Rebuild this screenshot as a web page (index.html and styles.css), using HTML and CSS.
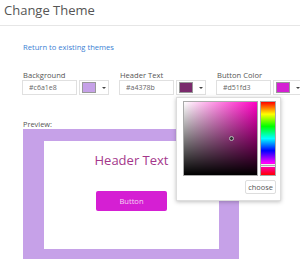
FILE: index.html
```html
<!DOCTYPE html>
<html lang="en">
<head>
  <meta charset="UTF-8">
  <title>Change Theme</title>
  <link rel="stylesheet" href="styles.css">
</head>
<body>
  <div class="header">
    <h1>Change Theme</h1>
  </div>

  <div class="content">
    <a class="back-link" href="#">Return to existing themes</a>

    <div class="fields">
      <div class="field">
        <label for="bg">Background</label>
        <div class="field-row">
          <input id="bg" type="text" value="#c6a1e8">
          <div class="swatch-btn">
            <span class="swatch swatch-bg"></span>
            <span class="caret"></span>
          </div>
        </div>
      </div>

      <div class="field">
        <label for="hdr">Header Text</label>
        <div class="field-row">
          <input id="hdr" type="text" value="#a4378b">
          <div class="swatch-btn">
            <span class="swatch swatch-hdr"></span>
            <span class="caret"></span>
            <div class="picker">
              <div class="picker-main">
                <div class="sv-box">
                  <span class="sv-cursor"></span>
                </div>
                <div class="hue-bar">
                  <span class="hue-marker"></span>
                </div>
              </div>
              <div class="picker-foot">
                <button class="choose-btn">choose</button>
              </div>
            </div>
          </div>
        </div>
      </div>

      <div class="field">
        <label for="btn">Button Color</label>
        <div class="field-row">
          <input id="btn" type="text" value="#d51fd3">
          <div class="swatch-btn">
            <span class="swatch swatch-btn-color"></span>
            <span class="caret"></span>
          </div>
        </div>
      </div>
    </div>

    <div class="preview-label">Preview:</div>
    <div class="preview">
      <div class="preview-inner">
        <div class="preview-title">Header Text</div>
        <div class="preview-button">Button</div>
      </div>
    </div>
  </div>
</body>
</html>
```

FILE: styles.css
```css
body {
  margin: 0;
  font-family: "Open Sans", "DejaVu Sans", sans-serif;
  background: #fff;
  color: #555;
  overflow: hidden;
}
.header {
  padding: 1px 0 6px 4px;
  border-bottom: 1px solid #e6e6e6;
}
h1 {
  margin: 0;
  font-size: 13px;
  line-height: 18px;
  font-weight: normal;
  color: #555;
}
.content {
  padding-left: 22px;
}
.back-link {
  display: block;
  margin-top: 16px;
  margin-left: 1px;
  font-size: 7.6px;
  line-height: 10px;
  color: #3b7fd4;
  text-decoration: none;
}
.fields {
  display: flex;
  gap: 10px;
  margin-top: 18px;
}
.field label {
  display: block;
  margin-left: 1px;
  font-size: 7.6px;
  line-height: 10px;
  color: #555;
}
.field-row {
  display: flex;
  gap: 2px;
}
.field-row input {
  box-sizing: border-box;
  width: 55px;
  height: 15px;
  margin: 0;
  padding: 0 0 0 6px;
  border: 1px solid #e0e0e0;
  font-family: inherit;
  font-size: 7px;
  color: #666;
  outline: none;
}
.swatch-btn {
  position: relative;
  box-sizing: border-box;
  width: 30px;
  height: 15px;
  border: 1px solid #e0e0e0;
  display: flex;
  align-items: center;
  padding-left: 2px;
}
.swatch {
  box-sizing: border-box;
  width: 14px;
  height: 11px;
  border: 1px solid #999;
}
.swatch-bg { background: #c6a1e8; }
.swatch-hdr { background: #7a2a6c; }
.swatch-btn-color { background: #d51fd3; }
.caret {
  margin-left: 6px;
  width: 0;
  height: 0;
  border-left: 2px solid transparent;
  border-right: 2px solid transparent;
  border-top: 2px solid #444;
}
.picker {
  position: absolute;
  left: -1px;
  top: 16px;
  z-index: 5;
  box-sizing: border-box;
  width: 105px;
  height: 104px;
  padding: 3px 4px 0 6px;
  background: #fff;
  border: 1px solid #ddd;
  box-shadow: 0 1px 4px rgba(0,0,0,0.25);
}
.picker-main {
  display: flex;
  gap: 2px;
}
.sv-box {
  position: relative;
  box-sizing: border-box;
  width: 75px;
  height: 75px;
  border: 1px solid #aaa;
  background:
    linear-gradient(to top, #000, rgba(0,0,0,0)),
    linear-gradient(to right, #fff, #ff00c3);
}
.sv-cursor {
  position: absolute;
  left: 45px;
  top: 34px;
  box-sizing: border-box;
  width: 5px;
  height: 5px;
  border-radius: 50%;
  background: #333;
  border: 1px solid #bbb;
}
.hue-bar {
  position: relative;
  box-sizing: border-box;
  width: 16px;
  height: 75px;
  border: 1px solid #aaa;
  background: linear-gradient(to bottom, #f00, #ff0, #0f0, #0ff, #00f, #f0f, #f00);
}
.hue-marker {
  position: absolute;
  left: 0;
  right: 0;
  top: 62px;
  height: 3px;
  box-sizing: border-box;
  background: #aaa;
  border-top: 1px solid #eee;
  border-bottom: 1px solid #eee;
}
.picker-foot {
  display: flex;
  justify-content: flex-end;
  margin-top: 4px;
}
.choose-btn {
  box-sizing: border-box;
  width: 31px;
  height: 14px;
  padding: 0;
  background: #fff;
  border: 1px solid #ddd;
  border-radius: 2px;
  font-family: inherit;
  font-size: 7.4px;
  color: #555;
}
.preview-label {
  margin-top: 24px;
  margin-left: 1px;
  font-size: 7.4px;
  line-height: 10px;
  color: #555;
}
.preview {
  box-sizing: border-box;
  width: 216px;
  height: 130px;
  margin-left: 1px;
  padding: 12px 20px 10px 21px;
  background: #c6a1e8;
}
.preview-inner {
  height: 100%;
  background: #fff;
  display: flex;
  flex-direction: column;
  align-items: center;
  padding-top: 10px;
  box-sizing: border-box;
}
.preview-title {
  font-size: 13px;
  line-height: 18px;
  color: #a4378b;
}
.preview-button {
  margin-top: 22px;
  width: 71px;
  height: 20px;
  line-height: 20px;
  text-align: center;
  background: #d51fd3;
  border-radius: 2px;
  font-size: 7.6px;
  color: #f6d8f5;
}
```
